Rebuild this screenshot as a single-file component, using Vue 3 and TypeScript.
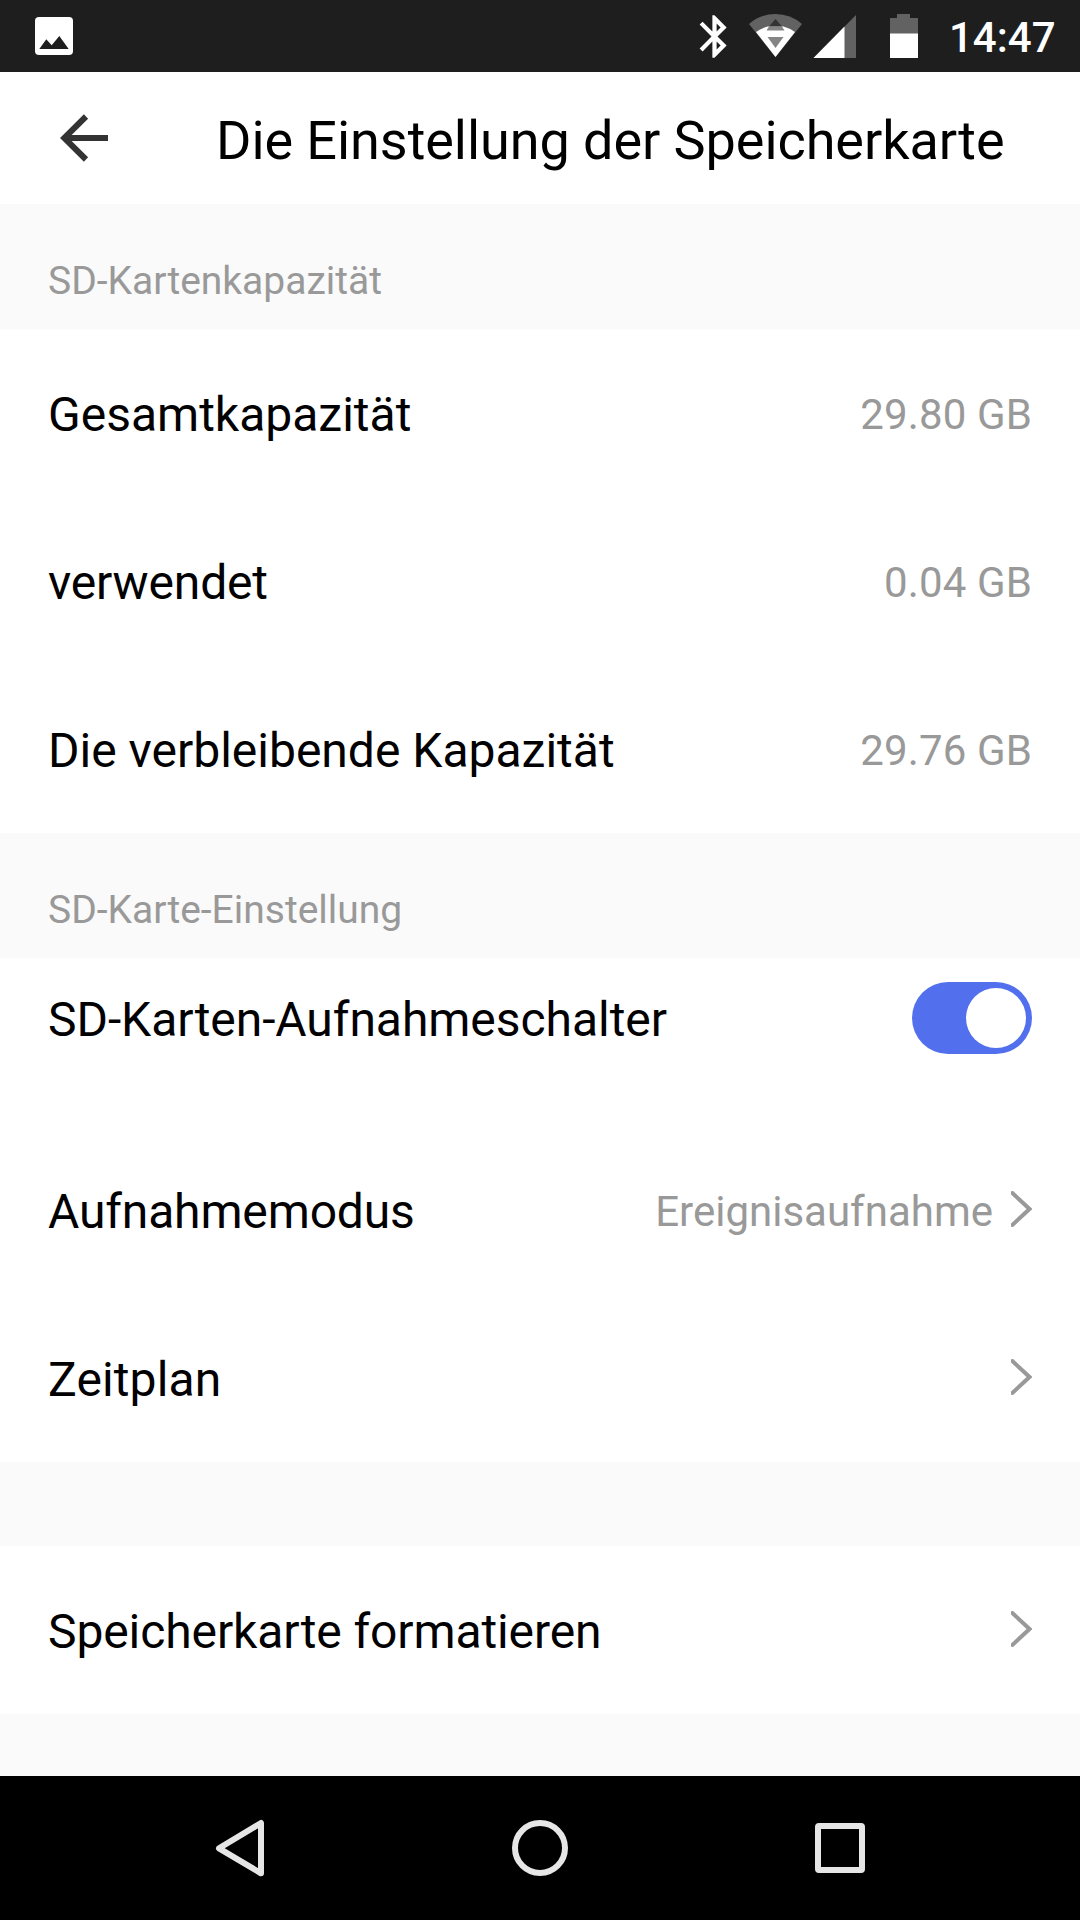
<script setup lang="ts">
import { ref } from 'vue'

interface InfoRow {
  label: string
  value: string
  tracking: string
}

const capacity: InfoRow[] = [
  { label: 'Gesamtkapazität', value: '29.80 GB', tracking: '0' },
  { label: 'verwendet', value: '0.04 GB', tracking: '-0.16px' },
  { label: 'Die verbleibende Kapazität', value: '29.76 GB', tracking: '0' },
]

const links: InfoRow[] = [
  { label: 'Aufnahmemodus', value: 'Ereignisaufnahme', tracking: '-0.14px' },
  { label: 'Zeitplan', value: '', tracking: '0.12px' },
]

const recording = ref(true)
</script>

<template>
  <div class="screen">
    <div class="status">
      <svg class="photo" width="38" height="38" viewBox="0 0 38 38">
        <rect width="38" height="38" rx="4" fill="#fff" />
        <path d="M4.3 32 11.3 22.3 16.7 28.3 24.3 19 33.7 32Z" fill="#1e1e1e" />
      </svg>
      <div class="tray">
        <svg class="bt" width="51" height="51" viewBox="0 0 24 24">
          <path fill="#fff" d="M17.71 7.71 12 2h-1v7.59L6.41 5 5 6.41 10.59 12 5 17.59 6.41 19 11 14.41V22h1l5.71-5.71-4.3-4.29 4.3-4.29zM13 5.83l1.88 1.88L13 9.59V5.83zm1.88 10.46L13 18.17v-3.76l1.88 1.88z" />
        </svg>
        <svg class="wifi" width="54" height="44" viewBox="0.5 0 54 44">
          <path fill="#626262" d="M0.5 10Q12 0 27 0T53.500 10L27 43Z" />
          <path fill="#fff" d="M7.5 18Q12 14.500 19 12.500H35Q42 14.500 46.500 18L27 43Z" />
          <path fill="#333" d="M27 5 33.500 12.500H20.500Z" />
          <path fill="#858585" d="M20.500 12.500h13l2.500 4H18ZM19 23H35L27 34Z" />
        </svg>
        <svg class="signal" width="43" height="43" viewBox="0 0 43 43">
          <path fill="#626262" d="M43 0V43H.5Z" />
          <path fill="#fff" d="M31.500 11.600V43H.5Z" />
        </svg>
        <svg class="battery" width="28" height="44" viewBox="0 0 28 44">
          <path fill="#626262" d="M7 0H20V4H28V20H0V4H7Z" />
          <path fill="#fff" d="M0 19.500H28V44H0Z" />
        </svg>
        <span class="clock">14:47</span>
      </div>
    </div>

    <header class="header">
      <svg class="back" width="48" height="50" viewBox="0 0 48 50">
        <path d="M26 3.500 4.200 25 26 46.500M4 25H48" fill="none" stroke="#333" stroke-width="6" />
      </svg>
      <h1 class="title">Die Einstellung der Speicherkarte</h1>
    </header>

    <h2 class="section">SD-Kartenkapazität</h2>
    <div v-for="row in capacity" :key="row.label" class="row">
      <span class="label" :style="{ letterSpacing: row.tracking }">{{ row.label }}</span>
      <span class="value amount">{{ row.value }}</span>
    </div>

    <h2 class="section">SD-Karte-Einstellung</h2>
    <div class="row compact">
      <span class="label switch-label">SD-Karten-Aufnahmeschalter</span>
      <button class="toggle" :class="{ on: recording }" @click="recording = !recording">
        <span class="knob"></span>
      </button>
    </div>
    <div v-for="row in links" :key="row.label" class="row">
      <span class="label" :style="{ letterSpacing: row.tracking }">{{ row.label }}</span>
      <span class="value">{{ row.value }}</span>
      <svg class="chevron" width="21" height="36" viewBox="0 0 21 36">
        <path d="M0 .8 18.500 18 0 35.200" fill="none" stroke="#999" stroke-width="4" />
      </svg>
    </div>

    <div class="gap"></div>
    <div class="row">
      <span class="label format-label">Speicherkarte formatieren</span>
      <svg class="chevron" width="21" height="36" viewBox="0 0 21 36">
        <path d="M0 .8 18.500 18 0 35.200" fill="none" stroke="#999" stroke-width="4" />
      </svg>
    </div>

    <nav class="nav">
      <svg width="60" height="60" viewBox="0 0 60 60">
        <path d="M9 30.300 51 5V55.300Z" fill="none" stroke="#e6e6e6" stroke-width="6" stroke-linejoin="round" />
      </svg>
      <svg width="60" height="60" viewBox="0 0 60 60">
        <circle cx="30" cy="30" r="25" fill="none" stroke="#e6e6e6" stroke-width="6" />
      </svg>
      <svg width="60" height="60" viewBox="0 0 60 60">
        <path fill="#e6e6e6" fill-rule="evenodd" d="M9 5H51Q55 5 55 9V51Q55 55 51 55H9Q5 55 5 51V9Q5 5 9 5ZM11 11V49H49V11Z" />
      </svg>
    </nav>
  </div>
</template>

<style>
body {
  margin: 0;
}
</style>

<style scoped>
.screen {
  width: 1080px;
  height: 1920px;
  display: flex;
  flex-direction: column;
  background: #fafafa;
  font-family: Roboto, 'Liberation Sans', sans-serif;
  color: #000;
  overflow: hidden;
}

.screen > * {
  flex: none;
  box-sizing: border-box;
}

svg {
  display: block;
  flex: none;
}

.status {
  height: 72px;
  display: flex;
  align-items: center;
  justify-content: space-between;
  padding: 0 25px 0 35px;
  background: #1e1e1e;
}

.tray {
  display: flex;
  align-items: center;
}

.wifi {
  margin-left: 9px;
}

.signal {
  margin-left: 10px;
}

.battery {
  margin-left: 34px;
}

.clock {
  width: 106px;
  margin-left: 31px;
  padding-top: 3px;
  font-size: 42px;
  font-weight: 500;
  line-height: 72px;
  color: #fff;
  white-space: nowrap;
}

.header {
  height: 132px;
  display: flex;
  align-items: center;
  padding-left: 60px;
  background: #fff;
}

.title {
  margin: 0 0 0 108px;
  padding-top: 5px;
  font-size: 54px;
  font-weight: 400;
  line-height: 64px;
  letter-spacing: -0.06px;
  white-space: nowrap;
}

.section {
  height: 125px;
  margin: 0;
  padding: 50px 48px 0;
  font-size: 39px;
  font-weight: 400;
  line-height: 54px;
  color: #999;
}

.row {
  height: 168px;
  box-sizing: border-box;
  display: flex;
  align-items: center;
  padding: 0 48px;
  background: #fff;
}

.compact {
  padding-bottom: 48px;
}

.label {
  flex: 1;
  padding-top: 3px;
  font-size: 48px;
  line-height: 56px;
  white-space: nowrap;
}

.switch-label {
  letter-spacing: -0.05px;
}

.format-label {
  letter-spacing: -0.1px;
}

.value {
  padding-top: 3px;
  font-size: 42px;
  line-height: 50px;
  color: #999;
  white-space: nowrap;
}

.amount {
  letter-spacing: 0.12px;
}

.chevron {
  margin: 0 0 2px 18px;
}

.toggle {
  width: 120px;
  height: 72px;
  display: flex;
  padding: 6px;
  border: 0;
  border-radius: 36px;
  background: #ccc;
}

.toggle.on {
  justify-content: flex-end;
  background: #5270ee;
}

.knob {
  width: 60px;
  height: 60px;
  border-radius: 50%;
  background: #fff;
}

.gap {
  height: 84px;
}

.nav {
  height: 144px;
  margin-top: auto;
  display: flex;
  align-items: center;
  justify-content: center;
  gap: 240px;
  background: #000;
}
</style>
